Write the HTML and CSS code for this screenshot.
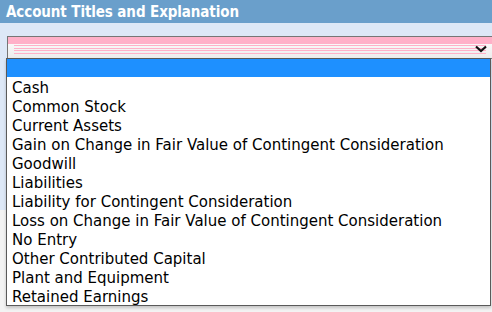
FILE: index.html
```html
<!DOCTYPE html>
<html lang="en">
<head>
    <meta charset="UTF-8">
    <meta name="viewport" content="width=device-width, initial-scale=1.0">
    <title>Account Titles and Explanation</title>
    <link rel="stylesheet" href="styles.css">
</head>
<body>
    <div class="panel">
        <div class="panel-header">Account Titles and Explanation</div>
        <div class="panel-body">
            <div class="select-box">
                <div class="select-band"></div>
                <div class="select-lines"></div>
                <svg class="chevron" width="12" height="8" viewBox="0 0 12 8">
                    <path d="M1 1.5 L6 6 L11 1.5" fill="none" stroke="#111" stroke-width="2.2"/>
                </svg>
            </div>
        </div>

        <ul class="dropdown">
            <li class="selected">&nbsp;</li>
            <li>Cash</li>
            <li>Common Stock</li>
            <li>Current Assets</li>
            <li>Gain on Change in Fair Value of Contingent Consideration</li>
            <li>Goodwill</li>
            <li>Liabilities</li>
            <li>Liability for Contingent Consideration</li>
            <li>Loss on Change in Fair Value of Contingent Consideration</li>
            <li>No Entry</li>
            <li>Other Contributed Capital</li>
            <li>Plant and Equipment</li>
            <li>Retained Earnings</li>
        </ul>
    </div>
</body>
</html>
```

FILE: styles.css
```css
body {
    margin: 0;
    background-color: #fff;
    font-family: "DejaVu Sans", Verdana, sans-serif;
    color: #000;
}
.panel {
    position: relative;
    width: 492px;
    height: 312px;
    overflow: hidden;
}
.panel-header {
    height: 23px;
    line-height: 24px;
    padding-left: 6px;
    background-color: #6a9fcb;
    color: #fff;
    font-family: "DejaVu Sans Condensed", "DejaVu Sans", sans-serif;
    font-weight: bold;
    font-size: 15px;
    letter-spacing: -0.1px;
}
.panel-body {
    height: 289px;
    background: linear-gradient(#dde8f7 0 187px, #f3f3f3 187px);
    padding: 13px 0 0 7px;
    box-sizing: border-box;
}
.select-box {
    position: relative;
    height: 23px;
    border: 1px solid #767676;
    border-right: none;
    box-sizing: border-box;
    background: linear-gradient(#fff, #ececec);
}
.select-band {
    height: 7px;
    background-color: #ffb0c8;
}
.select-lines {
    height: 10px;
    margin: 1px 6px 0 6px;
    background: repeating-linear-gradient(#ffb0c8 0 1px, transparent 1px 2.6px);
}
.chevron {
    position: absolute;
    right: 5px;
    top: 8px;
}
.dropdown {
    position: absolute;
    left: 6px;
    top: 58px;
    width: 485px;
    margin: 0;
    padding: 0;
    list-style: none;
    background-color: #fff;
    border: 1px solid #5a5a5a;
    box-sizing: border-box;
    box-shadow: 0 2px 3px rgba(0, 0, 0, 0.2);
}
.dropdown li {
    height: 19px;
    line-height: 22px;
    padding-left: 5px;
    font-size: 15px;
    white-space: nowrap;
}
.dropdown li.selected {
    background-color: #1e90ff;
    height: 18px;
}
```
